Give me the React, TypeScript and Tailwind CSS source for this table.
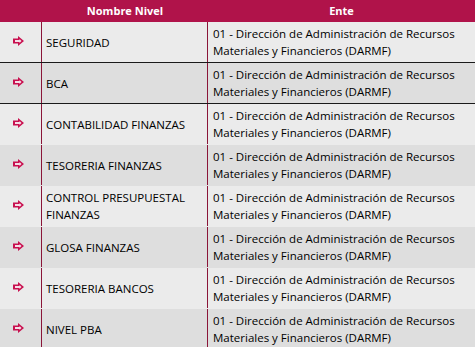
import React from 'react';

const niveles = [
  { nombre: 'SEGURIDAD', borde: true },
  { nombre: 'BCA', borde: true },
  { nombre: 'CONTABILIDAD FINANZAS' },
  { nombre: 'TESORERIA FINANZAS' },
  { nombre: 'CONTROL PRESUPUESTAL FINANZAS' },
  { nombre: 'GLOSA FINANZAS' },
  { nombre: 'TESORERIA BANCOS' },
  { nombre: 'NIVEL PBA' },
];

const Flecha = () => (
  <svg width="11" height="10" viewBox="0 0 11 10" className="block">
    <path d="M0 2.5 H5 V0 L11 5 L5 10 V7.5 H0 Z" fill="#c8104f" />
    <path d="M2 4 H6.5 V3 L8.5 5 L6.5 7 V6 H2 Z" fill="#f6dde6" />
  </svg>
);

export default function App() {
  return (
    <div className="w-[475px] h-[347px] overflow-hidden bg-white text-[11.5px] text-black" style={{ fontFamily: '"Open Sans", "Noto Sans", sans-serif' }}>
      <div className="grid grid-cols-[42px_166px_1fr] h-[22px] bg-[#b0134a] text-white font-bold text-[11px] items-center">
        <div />
        <div className="text-center">Nombre Nivel</div>
        <div className="text-center">Ente</div>
      </div>
      {niveles.map((n, i) => (
        <div
          key={n.nombre}
          className={`grid grid-cols-[42px_166px_1fr] h-[41px] border-b ${n.borde ? 'border-[#1a1a1a]' : 'border-transparent'} ${i % 2 === 0 ? 'bg-[#ebebeb]' : 'bg-[#dedede]'}`}
        >
          <div className="flex items-center justify-center border-r border-[#8a1538] pr-[4px] pb-[2px]">
            <Flecha />
          </div>
          <div className="flex items-center pl-[4px] pr-2 leading-[17px] border-r border-[#8a1538]">{n.nombre}</div>
          <div className="flex items-center pl-[5px] leading-[17px]">
            01 - Dirección de Administración de Recursos Materiales y Financieros (DARMF)
          </div>
        </div>
      ))}
    </div>
  );
}
